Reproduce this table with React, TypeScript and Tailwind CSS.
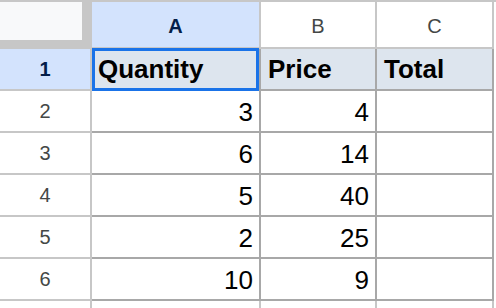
import React from "react";

const data: [number, number][] = [
  [3, 4],
  [6, 14],
  [5, 40],
  [2, 25],
  [10, 9],
];

export default function App() {
  return (
    <div className="w-[496px] h-[308px] overflow-hidden bg-white font-['Liberation_Sans',Arial,sans-serif]">
      <div className="h-[2px] bg-[#c7c7c7]" />
      <div className="grid grid-cols-[92px_169px_116px_117px_2px]">
        {/* header row */}
        <div className="h-[47px] bg-[#c7c7c7]">
          <div className="w-[82px] h-[38px] bg-[#f8f9fa]" />
        </div>
        <div className="h-[47px] bg-[#d3e3fd] border-r-2 border-b-2 border-[#c7c7c7] flex items-center justify-center pt-[2px] text-[20px] font-bold text-[#041e49]">
          A
        </div>
        <div className="h-[47px] bg-white border-r-2 border-b-2 border-[#c7c7c7] flex items-center justify-center pt-[2px] text-[20px] text-[#444746]">
          B
        </div>
        <div className="h-[47px] bg-white border-r-2 border-b-2 border-[#c7c7c7] flex items-center justify-center pt-[2px] text-[20px] text-[#444746]">
          C
        </div>
        <div className="h-[47px] bg-white" />

        {/* row 1 */}
        <div className="h-[42px] bg-[#d3e3fd] border-r-2 border-b-2 border-[#c7c7c7] flex items-center justify-center text-[20px] font-bold text-[#041e49]">
          1
        </div>
        <div className="relative h-[42px] bg-[#dde5ee] border-r-2 border-b-2 border-[#a8a8a8] flex items-center pl-[6px] text-[26px] font-bold text-black">
          Quantity
          <div className="absolute left-0 top-[-1px] right-0 bottom-[-2px] border-[3px] border-[#1a73e8]" />
        </div>
        <div className="h-[42px] bg-[#dde5ee] border-r-2 border-b-2 border-[#a8a8a8] flex items-center pl-[7px] text-[26px] font-bold text-black">
          Price
        </div>
        <div className="h-[42px] bg-[#dde5ee] border-r-2 border-b-2 border-[#a8a8a8] flex items-center pl-[7px] text-[26px] font-bold text-black">
          Total
        </div>
        <div className="h-[42px] bg-white" />

        {data.map(([q, p], i) => (
          <React.Fragment key={i}>
            <div className="h-[42px] bg-white border-r-2 border-b-2 border-[#c7c7c7] flex items-center justify-center text-[20px] text-[#444746]">
              {i + 2}
            </div>
            <div className="h-[42px] bg-white border-r-2 border-b-2 border-[#a8a8a8] flex items-center justify-end pr-[6px] pt-[2px] text-[26px] text-black">
              {q}
            </div>
            <div className="h-[42px] bg-white border-r-2 border-b-2 border-[#a8a8a8] flex items-center justify-end pr-[6px] pt-[2px] text-[26px] text-black">
              {p}
            </div>
            <div className="h-[42px] bg-white border-r-2 border-b-2 border-[#a8a8a8]" />
            <div className="h-[42px] bg-white" />
          </React.Fragment>
        ))}

        {/* row 7 (partial) */}
        <div className="h-[20px] bg-white border-r-2 border-[#c7c7c7]" />
        <div className="h-[20px] bg-white border-r-2 border-[#c7c7c7]" />
        <div className="h-[20px] bg-white border-r-2 border-[#c7c7c7]" />
        <div className="h-[20px] bg-white border-r-2 border-[#c7c7c7]" />
        <div className="h-[20px] bg-white" />
      </div>
    </div>
  );
}
